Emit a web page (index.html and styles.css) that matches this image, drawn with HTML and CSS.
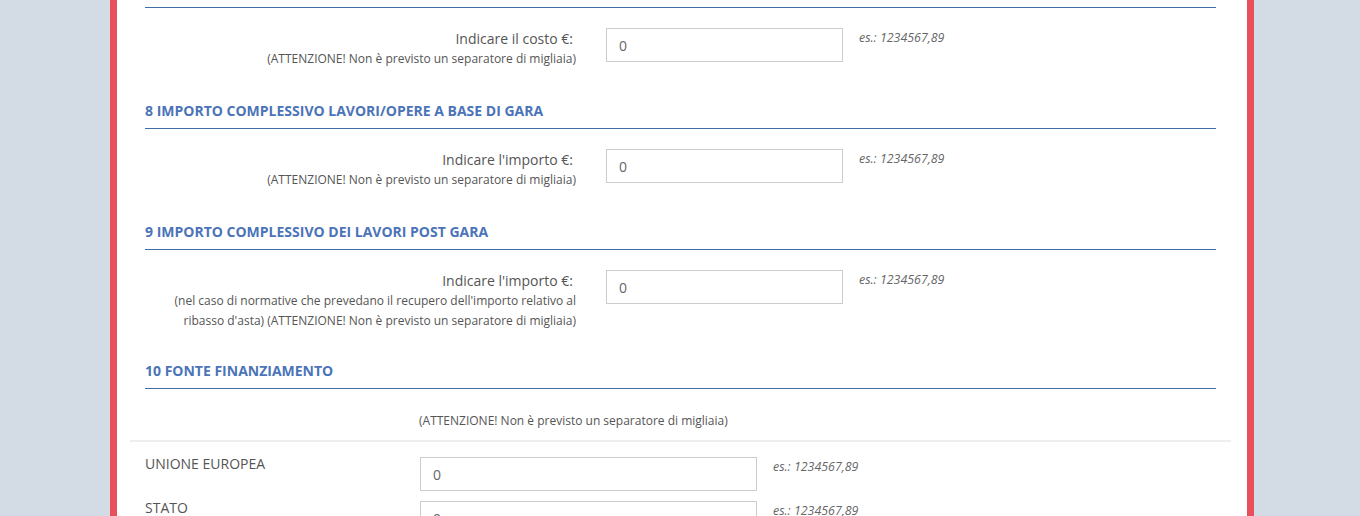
FILE: index.html
```html
<!DOCTYPE html>
<html lang="it">
<head>
  <meta charset="UTF-8">
  <title>Quadro economico</title>
  <link rel="stylesheet" href="styles.css">
</head>
<body>

  <div class="page">
    <div class="section-rule"></div>

    <div class="field-row">
      <div class="field-label">
        <span class="label-main">Indicare il costo €:</span>
        <span class="label-note">(ATTENZIONE! Non è previsto un separatore di migliaia)</span>
      </div>
      <input type="text" class="amount" value="0">
      <span class="hint">es.: 1234567,89</span>
    </div>

    <h3 class="section-title">8 IMPORTO COMPLESSIVO LAVORI/OPERE A BASE DI GARA</h3>

    <div class="field-row">
      <div class="field-label">
        <span class="label-main">Indicare l'importo €:</span>
        <span class="label-note">(ATTENZIONE! Non è previsto un separatore di migliaia)</span>
      </div>
      <input type="text" class="amount" value="0">
      <span class="hint">es.: 1234567,89</span>
    </div>

    <h3 class="section-title">9 IMPORTO COMPLESSIVO DEI LAVORI POST GARA</h3>

    <div class="field-row">
      <div class="field-label">
        <span class="label-main">Indicare l'importo €:</span>
        <span class="label-note">(nel caso di normative che prevedano il recupero dell'importo relativo al ribasso d'asta) (ATTENZIONE! Non è previsto un separatore di migliaia)</span>
      </div>
      <input type="text" class="amount" value="0">
      <span class="hint">es.: 1234567,89</span>
    </div>

    <h3 class="section-title">10 FONTE FINANZIAMENTO</h3>

    <div class="funding">
      <div class="funding-head">
        <span class="label-note">(ATTENZIONE! Non è previsto un separatore di migliaia)</span>
      </div>
      <div class="funding-row first">
        <span class="funding-label">UNIONE EUROPEA</span>
        <input type="text" class="amount wide" value="0">
        <span class="hint">es.: 1234567,89</span>
      </div>
      <div class="funding-row">
        <span class="funding-label">STATO</span>
        <input type="text" class="amount wide" value="0">
        <span class="hint">es.: 1234567,89</span>
      </div>
    </div>
  </div>

</body>
</html>
```

FILE: styles.css
```css
body {
  margin: 0;
  background: #d3dbe5;
  font-family: "Open Sans", sans-serif;
  color: #555;
  overflow: hidden;
}

.page {
  margin-left: 110px;
  width: 1071px;
  min-height: 600px;
  background: #fff;
  border-left: 7px solid #e8505b;
  border-right: 7px solid #e8505b;
  padding: 0 31px 0 28px;
}

.section-rule {
  height: 7px;
  border-bottom: 1px solid #3f6ea8;
}

.section-title {
  margin: 0;
  padding: 0 0 7px;
  font-size: 14px;
  line-height: 20px;
  font-weight: 700;
  color: #4b74b8;
  border-bottom: 1px solid #3f6ea8;
}

/* riga: etichetta a destra, campo, esempio */
.field-row {
  display: flex;
  align-items: flex-start;
  padding: 20px 0 30px;
}

.field-label {
  width: 431px;
  min-height: 42px;
  display: flex;
  flex-direction: column;
  align-items: flex-end;
  text-align: right;
  padding-top: 1px;
}

.label-main {
  font-size: 14px;
  line-height: 20px;
  padding-right: 3px;
}

.label-note {
  font-size: 12px;
  line-height: 20px;
  max-width: 420px;
}

.amount {
  margin-left: 30px;
  width: 237px;
  height: 34px;
  box-sizing: border-box;
  border: 1px solid #ccc;
  padding: 0 12px;
  font-family: "Open Sans", sans-serif;
  font-size: 14px;
  color: #666;
  outline: none;
}

.amount.wide {
  width: 337px;
  margin-left: 0;
}

.hint {
  margin-left: 16px;
  font-size: 12.4px;
  line-height: 20px;
  font-style: italic;
  color: #666;
}

/* fonti di finanziamento */
.funding {
  padding-top: 22px;
}

.funding-head {
  padding-left: 274px;
  padding-bottom: 9px;
  margin: 0 -15px;
  border-bottom: 2px solid #eee;
}

.funding-head .label-note {
  display: block;
  padding-left: 15px;
  max-width: none;
}

.funding-row {
  display: flex;
  align-items: flex-start;
  margin-top: 10px;
}

.funding-row.first {
  margin-top: 15px;
}

.funding-label {
  width: 275px;
  font-size: 14px;
  line-height: 20px;
  margin-top: -3px;
}
```
